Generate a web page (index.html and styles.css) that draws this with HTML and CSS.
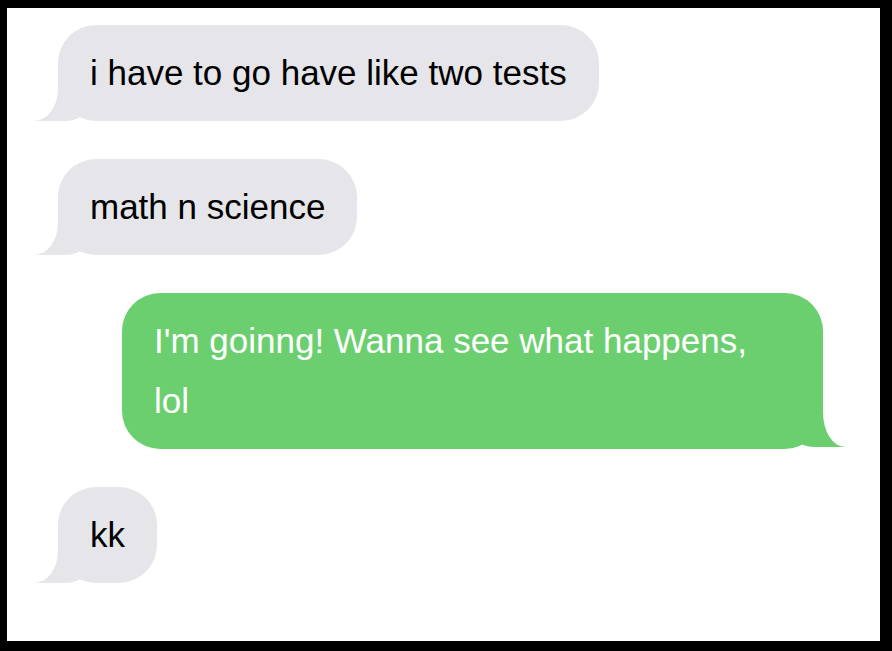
FILE: index.html
```html
<!DOCTYPE html>
<html lang="en">
<head>
    <meta charset="UTF-8">
    <meta name="viewport" content="width=device-width, initial-scale=1.0">
    <title>Messages</title>
    <link rel="stylesheet" href="styles.css">
</head>
<body>
    <div class="chat">
        <p class="bubble them">i have to go have like two tests</p>
        <p class="bubble them">math n science</p>
        <p class="bubble me">I'm goinng! Wanna see what happens, lol</p>
        <p class="bubble them">kk</p>
    </div>
</body>
</html>
```

FILE: styles.css
```css
body {
    margin: 0;
    padding: 8px 12px 10px 7px;
    background: #000;
    font-family: "Liberation Sans", Arial, Helvetica, sans-serif;
}
.chat {
    background: #fff;
    height: 633px;
    box-sizing: border-box;
    padding: 17px 57px 0 51px;
    display: flex;
    flex-direction: column;
    gap: 38px;
}
.bubble {
    position: relative;
    z-index: 0;
    margin: 0;
    max-width: 701px;
    box-sizing: border-box;
    padding: 18px 32px;
    border-radius: 38px;
    font-size: 35px;
    line-height: 60px;
}
.them {
    align-self: flex-start;
    background: #e5e5ea;
    color: #000;
}
.me {
    align-self: flex-end;
    background: #6bcf6f;
    color: #fff;
}
.bubble::before,
.bubble::after {
    content: "";
    position: absolute;
    z-index: -1;
    bottom: 0;
}
.them::before {
    left: -24px;
    width: 50px;
    height: 38px;
    background: #e5e5ea;
    border-bottom-right-radius: 20px 10px;
}
.them::after {
    left: -40px;
    width: 40px;
    height: 38px;
    background: #fff;
    border-bottom-right-radius: 24px 32px;
}
.me::before {
    right: -22px;
    width: 50px;
    height: 40px;
    bottom: 2px;
    background: #6bcf6f;
    border-bottom-left-radius: 20px 10px;
}
.me::after {
    right: -40px;
    width: 40px;
    height: 40px;
    bottom: 2px;
    background: #fff;
    border-bottom-left-radius: 22px 35px;
}
```
